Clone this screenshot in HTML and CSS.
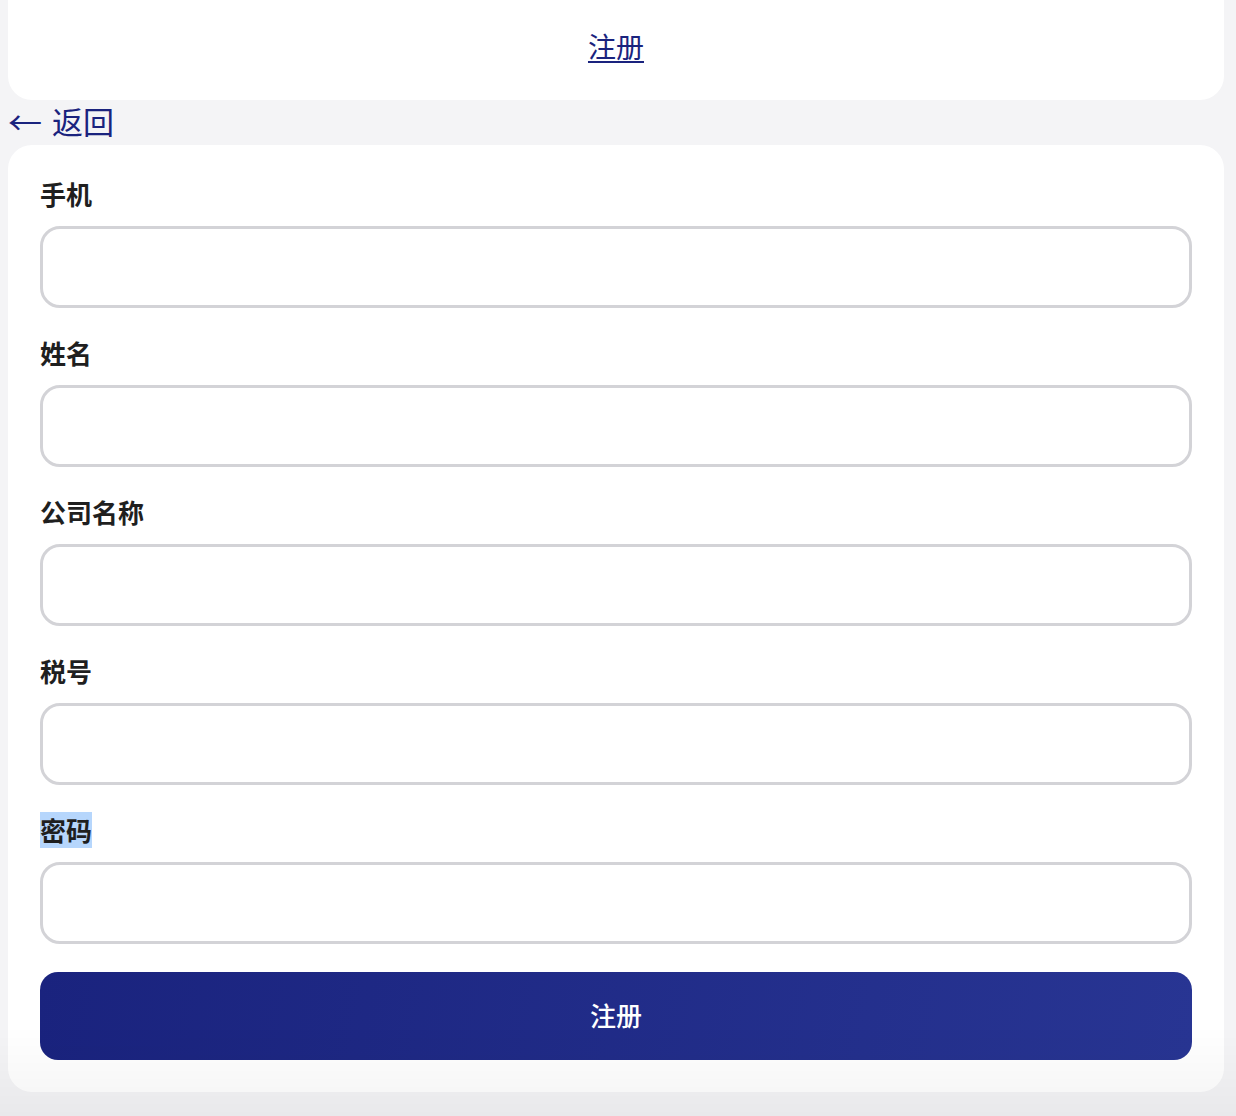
FILE: index.html
```html
<!DOCTYPE html>
<html lang="zh-CN">
<head>
<meta charset="utf-8">
<title>注册</title>
<link rel="stylesheet" href="styles.css">
</head>
<body>
<div class="top-card">
  <a class="top-link" href="#">注册</a>
</div>
<a class="back-link" href="#"><span class="back-arrow">←</span>返回</a>
<div class="form-card">
  <form class="form">
    <div class="field">
      <label class="label">手机</label>
      <input class="input" type="text">
    </div>
    <div class="field">
      <label class="label">姓名</label>
      <input class="input" type="text">
    </div>
    <div class="field">
      <label class="label">公司名称</label>
      <input class="input" type="text">
    </div>
    <div class="field">
      <label class="label">税号</label>
      <input class="input" type="text">
    </div>
    <div class="field">
      <label class="label"><span class="selected">密码</span></label>
      <input class="input" type="password">
    </div>
    <button class="submit" type="button">注册</button>
  </form>
</div>
</body>
</html>
```
FILE: styles.css
```css
html, body {
  margin: 0;
  padding: 0;
}
body {
  padding: 0 12px 0 8px;
  background: #f4f4f6;
  font-family: "Noto Sans CJK SC", "Noto Sans", sans-serif;
  min-height: 1116px;
  box-sizing: border-box;
}
body::after {
  content: "";
  position: fixed;
  left: 0;
  right: 0;
  bottom: 0;
  height: 90px;
  background: linear-gradient(to bottom, rgba(0,0,0,0), rgba(0,0,0,0.045));
  pointer-events: none;
}
.top-card {
  background: #fff;
  height: 100px;
  border-radius: 0 0 24px 24px;
  display: flex;
  align-items: center;
  justify-content: center;
}
.top-link {
  color: #1a237e;
  font-size: 28px;
  line-height: 1;
  text-decoration: underline;
  text-underline-offset: 3px;
  text-decoration-thickness: 2px;
  margin-top: -8px;
}
.back-link {
  display: flex;
  align-items: center;
  color: #1a237e;
  font-size: 31px;
  line-height: 41px;
  height: 45px;
  padding-bottom: 4px;
  box-sizing: border-box;
  text-decoration: none;
}
.back-arrow {
  display: inline-block;
  width: 32px;
  margin-right: 12px;
  transform: scaleX(1.1);
  transform-origin: left center;
}
.form-card {
  background: #fff;
  border-radius: 24px;
  padding: 33px 32px 32px;
}
.form {
  display: flex;
  flex-direction: column;
  gap: 29px;
  margin: 0;
}
.field {
  display: flex;
  flex-direction: column;
  gap: 12px;
}
.label {
  display: block;
  font-size: 26px;
  line-height: 32px;
  padding-bottom: 4px;
  font-weight: 600;
  color: #1f1f1f;
}
.selected {
  background: #b6d6fc;
  display: inline-block;
  line-height: 36px;
  margin: -2px 0;
}
.input {
  display: block;
  width: 100%;
  height: 82px;
  box-sizing: border-box;
  border: 3px solid #d3d3d7;
  border-radius: 20px;
  background: #fff;
  font-size: 26px;
  padding: 0 20px;
  outline: none;
  font-family: inherit;
}
.submit {
  display: block;
  width: 100%;
  height: 88px;
  margin-top: -1px;
  padding: 0 0 4px;
  border: none;
  border-radius: 18px;
  background: linear-gradient(100deg, #1a237e 0%, #283593 100%);
  color: #fff;
  font-family: inherit;
  font-size: 26px;
  font-weight: 500;
  cursor: pointer;
}
```
